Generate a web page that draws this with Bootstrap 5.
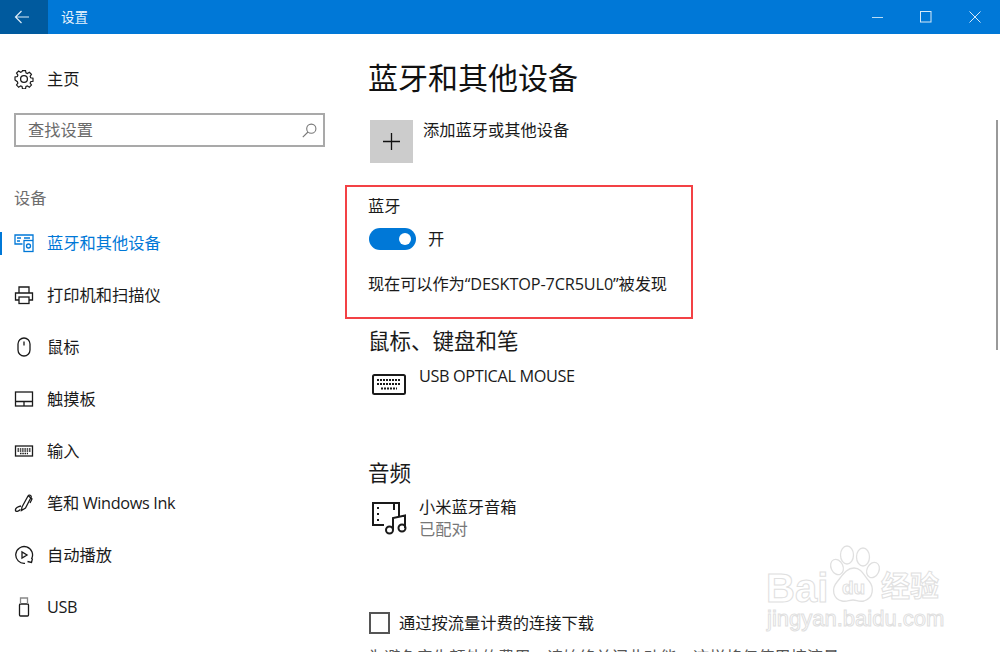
<!DOCTYPE html>
<html lang="zh-CN">
<head>
<meta charset="UTF-8">
<meta name="viewport" content="width=device-width, initial-scale=1.0">
<title>设置</title>
<link href="https://cdn.jsdelivr.net/npm/bootstrap@5.3.1/dist/css/bootstrap.min.css" rel="stylesheet">
<style>
html, body { height: 100%; overflow: hidden; }
body { font-family: "Open Sans", "Noto Sans CJK SC", sans-serif; font-size: 16.25px; color: #1a1a1a; line-height: 22px; background: #fff; }
.win-shell { position: relative; width: 1000px; height: 652px; overflow: hidden; }
.title-strip { height: 34px; background: #0078d7; color: #fff; padding-right: 1px; }
.back-btn { width: 48px; background: #005a9e; border: 0; padding: 0 4px 0 0; }
.title-text { font-size: 13.5px; padding-left: 13px; color: #e8f3fc; }
.win-ctl { width: 49px; }
.side-col { width: 345px; flex: none; }
.home-row { height: 22px; margin-top: 34px; padding-left: 14px; }
.nav-ico { width: 20px; height: 20px; flex: none; margin-right: 13px; fill: none; stroke: #1a1a1a; stroke-width: 1.3; }
.search-box { margin: 23px 0 0 14px; width: 311px; height: 34px; border: 2px solid #a9a9a9; padding: 0 6px 0 12px; color: #6b6b6b; }
.side-label { color: #6e6e6e; margin: 40px 0 0 14px; height: 22px; }
.side-list { margin-top: 8px; }
.side-item { height: 52px; padding-left: 14px; position: relative; }
.side-item.is-on { color: #0078d7; }
.side-item.is-on .nav-ico { stroke: #0078d7; }
.side-item.is-on::before { content: ""; position: absolute; left: 0; top: 15px; width: 2px; height: 23px; background: #0078d7; }
.main-col { padding: 24px 0 0 23px; min-width: 0; }
.page-head { font-size: 30px; line-height: 40px; font-weight: 400; margin: 0; color: #111; }
.add-row { margin-top: 22px; margin-left: 2px; }
.add-tile { width: 43px; height: 43px; background: #cccccc; }
.add-text { margin: -1px 0 0 10px; }
.red-frame { width: 348px; height: 134px; margin: 22px 0 0 -23px; border: 2px solid #f34145; padding: 8px 0 0 21px; }
.switch-line { margin-top: 11px; height: 22px; padding-left: 1px; }
.win-switch { width: 47px; height: 22px; border-radius: 11px; background: #0078d7; position: relative; }
.win-switch::after { content: ""; position: absolute; right: 5px; top: 5px; width: 12px; height: 12px; border-radius: 50%; background: #fff; }
.found-text { margin-top: 23px; letter-spacing: -.13px; }
.tight-latin { letter-spacing: -.35px; }
.group-head { font-size: 21.5px; line-height: 28px; font-weight: 400; margin: 8px 0 0; color: #1a1a1a; }
.group-head.audio-head { margin-top: 64px; }
.device-row { margin-left: 4px; margin-top: 10px; }
.device-row.audio-row { margin-top: 9px; }
.device-ico { fill: none; stroke: #1a1a1a; flex: none; margin-top: 8px; margin-right: 13px; }
.audio-row .device-ico { margin-top: 5px; margin-right: 11px; }
.device-name { line-height: 22px; }
.muted-line { color: #777; }
.check-line { margin-top: 72px; margin-left: 1px; }
.fake-check { width: 21px; height: 22px; border: 2px solid #555; flex: none; margin-right: 1px; }
.cut-line { color: #555; margin-top: 12px; white-space: nowrap; }
.scroll-thumb { position: absolute; right: 2px; top: 120px; width: 2px; height: 230px; background: #999; }
.mark-wrap { position: absolute; left: 765px; top: 544px; width: 200px; height: 96px; color: #fff; pointer-events: none; font-family: "Liberation Sans", sans-serif; -webkit-text-stroke: 1px #e0e0e0; }
.mark-bai { position: absolute; left: 1px; top: 23px; font-size: 40px; line-height: 42px; font-weight: 700; }
.mark-du { position: absolute; left: 77px; top: 33px; font-size: 19px; line-height: 22px; font-weight: 700; }
.mark-cn { position: absolute; left: 116px; top: 22px; font-size: 29px; line-height: 36px; font-weight: 700; font-family: "Noto Sans CJK SC", sans-serif; }
.mark-url { position: absolute; left: 2px; top: 61px; font-size: 22px; line-height: 28px; }
.mark-paw { position: absolute; left: 0; top: 0; }
</style>
</head>
<body>
<div class="win-shell">
  <div class="title-strip d-flex align-items-stretch">
    <button class="back-btn d-flex align-items-center justify-content-center" type="button" aria-label="返回">
      <svg width="16" height="14" viewBox="0 0 16 14" fill="none" stroke="#dcebf7" stroke-width="1.2"><path d="M15 7H1.5M7.5 1 1.5 7l6 6"/></svg>
    </button>
    <div class="title-text d-flex align-items-center flex-grow-1">设置</div>
    <div class="win-ctl d-flex align-items-center justify-content-center"><svg width="12" height="12" fill="none" stroke="#b9dcf5"><path d="M1 6.5h11"/></svg></div>
    <div class="win-ctl d-flex align-items-center justify-content-center"><svg width="12" height="12" fill="none" stroke="#d5e9f8"><rect x=".5" y=".5" width="10.5" height="10.5"/></svg></div>
    <div class="win-ctl d-flex align-items-center justify-content-center"><svg width="12" height="12" fill="none" stroke="#d5e9f8"><path d="M.5.5l11 11M11.5.5l-11 11"/></svg></div>
  </div>

  <div class="d-flex">
    <aside class="side-col">
      <div class="home-row d-flex align-items-center">
        <svg class="nav-ico" viewBox="0 0 20 20"><path d="M8.3 1.5h3.4l.5 2.6 1.5.7 2.3-1.4 2.3 2.4-1.5 2.2.6 1.5 2.6.6v3.3l-2.6.5-.6 1.5 1.5 2.2-2.4 2.4-2.2-1.5-1.5.6-.5 2.6H8.3l-.5-2.6-1.5-.6-2.2 1.5-2.4-2.4 1.5-2.2-.6-1.5L0 12v-3.3l2.6-.6.6-1.5-1.5-2.2L4 2l2.3 1.4 1.5-.7z" transform="translate(1 .2) scale(.9)"/><circle cx="10" cy="10" r="3.4"/></svg>
        <span>主页</span>
      </div>
      <div class="search-box d-flex align-items-center justify-content-between">
        <span>查找设置</span>
        <svg width="15" height="15" viewBox="0 0 15 15" fill="none" stroke="#777" stroke-width="1.1"><circle cx="9.3" cy="5.7" r="4.6"/><path d="M6 9 .8 14.2"/></svg>
      </div>
      <div class="side-label">设备</div>
      <div class="side-list">
        <div class="side-item is-on d-flex align-items-center">
          <svg class="nav-ico" viewBox="0 0 20 20"><path d="M19 7V2H1v9h7.500"/><path d="M3 5h4M3 8h3M10 5h6"/><rect x="10" y="7.500" width="9" height="11"/><circle cx="14.500" cy="13" r="2"/></svg>
          <span>蓝牙和其他设备</span>
        </div>
        <div class="side-item d-flex align-items-center">
          <svg class="nav-ico" viewBox="0 0 20 20"><path d="M5 8V2h10v6M5 15H1.500V8h17v7H15"/><rect x="5" y="12" width="10" height="6.500"/></svg>
          <span>打印机和扫描仪</span>
        </div>
        <div class="side-item d-flex align-items-center">
          <svg class="nav-ico" viewBox="0 0 20 20"><rect x="4" y="1" width="12" height="18" rx="6"/><path d="M10 4.500v4"/></svg>
          <span>鼠标</span>
        </div>
        <div class="side-item d-flex align-items-center">
          <svg class="nav-ico" viewBox="0 0 20 20"><rect x="1.500" y="3" width="17" height="14"/><path d="M1.500 12.500h17M10 12.500V17"/></svg>
          <span>触摸板</span>
        </div>
        <div class="side-item d-flex align-items-center">
          <svg class="nav-ico" viewBox="0 0 20 20"><rect x="1.500" y="5" width="17" height="10"/><path d="M3.500 8h13M3.500 10h13M6 12.500h8" stroke-dasharray="1.500 .8"/></svg>
          <span>输入</span>
        </div>
        <div class="side-item d-flex align-items-center">
          <svg class="nav-ico" viewBox="0 0 20 20"><path d="M8 14 14 3c1-2 4-.5 3 1.500L11.500 15l-4 2.500z"/><path d="M14 2.500 18 6l-2 4"/><path d="M7 13c-3 .5-6 2-5.500 4.500.3 1.500 3 1 5-1"/></svg>
          <span class="tight-latin">笔和 Windows Ink</span>
        </div>
        <div class="side-item d-flex align-items-center">
          <svg class="nav-ico" viewBox="0 0 20 20"><path d="M11 18.300A8.400 8.400 0 1 1 17.500 14"/><path d="M8 7v6l5-3zM18.500 13.500l-1 4-4-1"/></svg>
          <span>自动播放</span>
        </div>
        <div class="side-item d-flex align-items-center">
          <svg class="nav-ico" viewBox="0 0 20 20"><rect x="5.500" y="7" width="9" height="12" rx="1"/><path d="M6.500 7V1h7v6" stroke="#888"/></svg>
          <span class="tight-latin">USB</span>
        </div>
      </div>
    </aside>

    <main class="main-col flex-grow-1">
      <h1 class="page-head">蓝牙和其他设备</h1>
      <div class="add-row d-flex align-items-start">
        <div class="add-tile d-flex align-items-center justify-content-center">
          <svg width="17" height="17" fill="none" stroke="#111" stroke-width="1.300"><path d="M8.500 0v17M0 8.500h17"/></svg>
        </div>
        <div class="add-text">添加蓝牙或其他设备</div>
      </div>

      <section class="red-frame">
        <div>蓝牙</div>
        <div class="switch-line d-flex align-items-center gap-2">
          <div class="win-switch"></div>
          <span class="ms-1">开</span>
        </div>
        <div class="found-text">现在可以作为“DESKTOP-7CR5UL0”被发现</div>
      </section>

      <h2 class="group-head">鼠标、键盘和笔</h2>
      <div class="device-row d-flex">
        <svg class="device-ico" width="34" height="22" viewBox="0 0 34 22" stroke-width="2"><rect x="1" y="2" width="32" height="19" rx="1.500"/><path d="M5 7h24M5 11h24M9 15.500h16" stroke-dasharray="2 1"/></svg>
        <div class="device-name tight-latin">USB OPTICAL MOUSE</div>
      </div>

      <h2 class="group-head audio-head">音频</h2>
      <div class="device-row audio-row d-flex">
        <svg class="device-ico" width="36" height="34" viewBox="0 0 36 34" stroke-width="2"><path d="M12 24H1V2h26v13"/><path d="M6 6v2M6 12v2M6 18v2M22 2v7"/><circle cx="17.500" cy="29" r="3.500"/><circle cx="30" cy="27" r="3.500"/><path d="M21 29V17l12-2.500V27"/></svg>
        <div>
          <div class="device-name">小米蓝牙音箱</div>
          <div class="muted-line">已配对</div>
        </div>
      </div>

      <div class="check-line d-flex align-items-center gap-2">
        <div class="fake-check"></div>
        <span>通过按流量计费的连接下载</span>
      </div>
      <div class="cut-line">为避免产生额外的费用，请始终关闭此功能，这样将仅使用按流量</div>
    </main>
  </div>

  <div class="scroll-thumb"></div>

  <div class="mark-wrap">
    <svg class="mark-paw" width="200" height="60" viewBox="0 0 200 60" fill="#fff" stroke="#e0e0e0" stroke-width="1.300">
      <ellipse cx="72" cy="23" rx="6" ry="8" transform="rotate(-25 72 23)"/>
      <ellipse cx="82" cy="11" rx="6.500" ry="9"/>
      <ellipse cx="98" cy="13" rx="6.500" ry="9"/>
      <ellipse cx="108" cy="26" rx="6" ry="8" transform="rotate(25 108 26)"/>
      <path d="M89 24c8 0 10 8 15 13 5 6 5 17-5 20-6 1-7-1-11-1s-6 2-11 1c-9-2-11-12-5-19 5-6 9-14 17-14z"/>
    </svg>
    <span class="mark-bai">Bai</span>
    <span class="mark-du">du</span>
    <span class="mark-cn">经验</span>
    <span class="mark-url">jingyan.baidu.com</span>
  </div>
</div>
<script src="https://cdn.jsdelivr.net/npm/bootstrap@5.3.1/dist/js/bootstrap.bundle.min.js"></script>
</body>
</html>
